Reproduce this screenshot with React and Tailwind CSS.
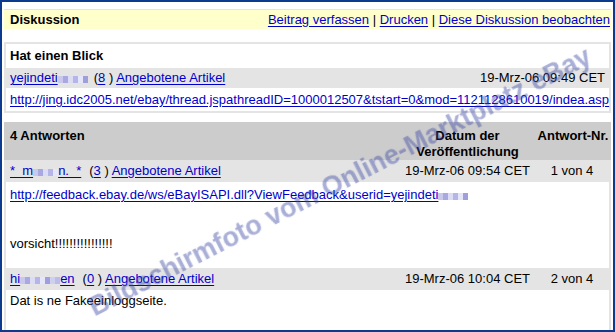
import React from 'react';

const blurColors = ['#c9c9ee', '#a9a9e2', '#dcdcf6', '#b5b5e8', '#e6e6fa', '#9f9fdc', '#cfcff1', '#bcbcea'];

function Blur({ n = 6 }) {
  return (
    <span className="inline-flex align-[-1px] h-[7px]">
      {Array.from({ length: n }).map((_, i) => (
        <span key={i} className="w-[5px] h-[7px]" style={{ backgroundColor: blurColors[i % blurColors.length] }} />
      ))}
    </span>
  );
}

function A({ children }) {
  return <span className="text-[#0000cc] underline underline-offset-[2px]">{children}</span>;
}

export default function App() {
  return (
    <div
      className="relative w-[615px] h-[332px] overflow-hidden bg-white border-2 border-[#0b3a8e] text-[13px] leading-[16px] text-black"
      style={{ fontFamily: '"Liberation Sans", Arial, sans-serif' }}
    >
      <div className="px-[2px] pt-[7px]">
        {/* Header bar */}
        <div className="flex items-center justify-between h-[20px] bg-[#ffffcc] border-t border-[#ffe98a] pl-[6px] pr-[1px]">
          <span className="font-bold">Diskussion</span>
          <span>
            <A>Beitrag verfassen</A> | <A>Drucken</A> | <A>Diese Diskussion beobachten</A>
          </span>
        </div>

        {/* Original post */}
        <div className="mt-[13px] border-2 border-[#e4e4e4]">
          <div className="h-[24px] flex items-center px-[4px] font-bold">Hat einen Blick</div>
          <div className="h-[20px] flex items-center justify-between bg-[#e4e4e4] pl-[4px] pr-[4px]">
            <span>
              <A>yejindeti<Blur n={6} /></A>
              <span className="ml-[6px]">(</span><A>8</A> ) <A>Angebotene Artikel</A>
            </span>
            <span>19-Mrz-06 09:49 CET</span>
          </div>
          <div className="h-[23px] flex items-center px-[4px]">
            <A>http://jing.idc2005.net/ebay/thread.jspathreadID=1000012507&amp;tstart=0&amp;mod=1121128610019/indea.asp</A>
          </div>
        </div>

        {/* Replies */}
        <div className="mt-[9px] border-x-2 border-[#e4e4e4] h-[220px]">
          <div className="-mx-[2px] h-[38px] bg-[#cccccc] grid grid-cols-[1fr_135px_76px] pt-[6px] font-bold">
            <span className="pl-[6px]">4 Antworten</span>
            <span className="text-center">Datum der<br />Veröffentlichung</span>
            <span className="text-center">Antwort-Nr.</span>
          </div>

          <div className="h-[22px] bg-[#e4e4e4] grid grid-cols-[1fr_135px_74px] items-center">
            <span className="pl-[4px]">
              <A>*&nbsp; m<Blur n={5} />n.&nbsp; *</A>
              <span className="ml-[8px]">(</span><A>3</A> ) <A>Angebotene Artikel</A>
            </span>
            <span className="text-center">19-Mrz-06 09:54 CET</span>
            <span className="text-center">1 von 4</span>
          </div>
          <div className="h-[86px] px-[4px] pt-[5px]">
            <A>http://feedback.ebay.de/ws/eBayISAPI.dll?ViewFeedback&amp;userid=yejindeti<Blur n={6} /></A>
            <div className="mt-[33px]">vorsicht!!!!!!!!!!!!!!!!</div>
          </div>

          <div className="h-[22px] bg-[#e4e4e4] grid grid-cols-[1fr_135px_74px] items-center">
            <span className="pl-[4px]">
              <A>hi<Blur n={8} />en</A>
              <span className="ml-[8px]">(</span><A>0</A> ) <A>Angebotene Artikel</A>
            </span>
            <span className="text-center">19-Mrz-06 10:04 CET</span>
            <span className="text-center">2 von 4</span>
          </div>
          <div className="px-[4px] pt-[3px]">Dat is ne Fakeeinloggseite.</div>
        </div>
      </div>

      {/* Watermark */}
      <div
        className="pointer-events-none absolute left-[338px] top-[180px] -translate-x-1/2 -translate-y-1/2 -rotate-[27deg] whitespace-nowrap font-bold text-[27px] leading-none text-[rgba(60,70,165,0.25)] blur-[0.4px]"
        style={{ textShadow: '0 0 1px rgba(60,70,165,0.25)' }}
      >
        Bildschirmfoto vom Online-Marktplatz eBay
      </div>
    </div>
  );
}
